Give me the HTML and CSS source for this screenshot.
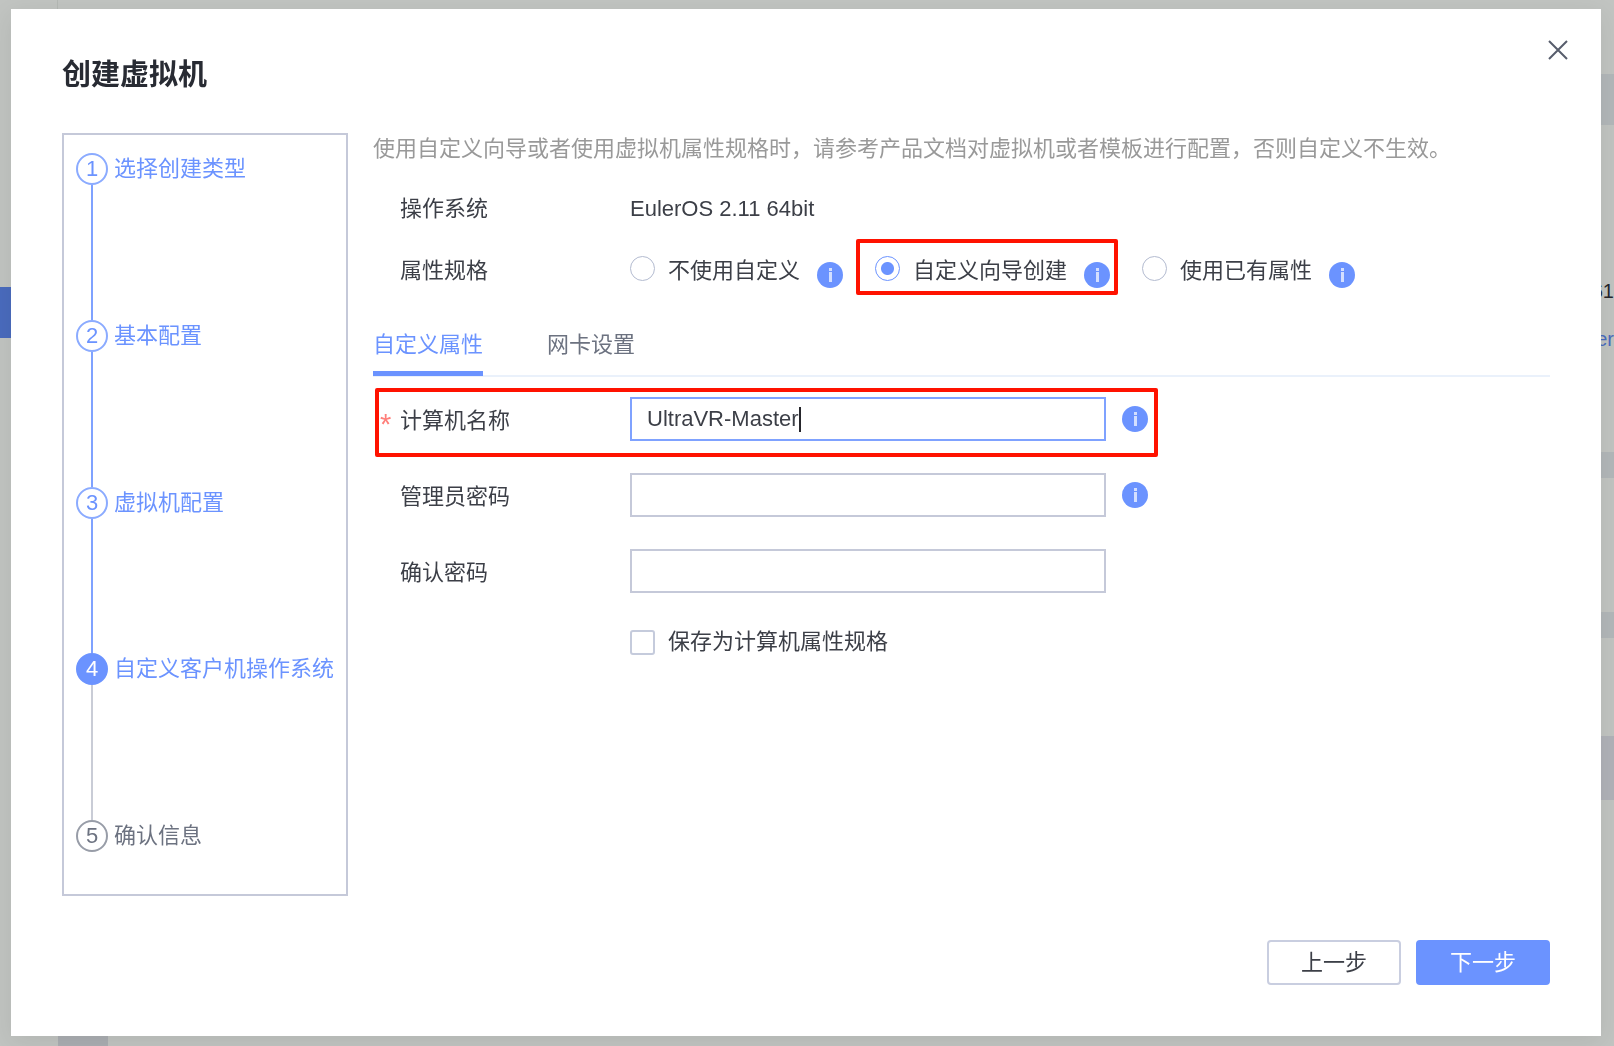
FILE: index.html
```html
<!DOCTYPE html>
<html lang="zh-CN">

<head>
    <meta charset="UTF-8">
    <meta name="viewport" content="width=device-width, initial-scale=1.0">
    <title>创建虚拟机</title>
    <link rel="stylesheet" href="styles.css">
</head>

<body>

    <svg class="sprite" aria-hidden="true">
        <symbol id="icon-info" viewBox="0 0 26 26">
            <circle cx="13" cy="13" r="13" fill="#6b93ff" />
            <rect x="12" y="6" width="3" height="3" fill="#d3dfff" />
            <rect x="12" y="10" width="3" height="10" fill="#d3dfff" />
        </symbol>
    </svg>

    <!-- page behind the dialog -->
    <div class="page" aria-hidden="true">
        <div class="page-nav"><span class="nav-active"></span></div>
        <div class="page-main">
            <span class="strip strip-head"></span>
            <div class="page-text">
                <span class="page-id">61</span>
                <span class="page-link">er</span>
            </div>
            <span class="strip strip-gap"></span>
            <span class="strip strip-gap"></span>
            <span class="strip strip-row"></span>
        </div>
        <div class="page-foot"></div>
    </div>

    <div class="overlay">
        <div class="dialog" role="dialog" aria-labelledby="dialogTitle">
            <button type="button" class="close" aria-label="关闭">
                <svg width="20" height="20" viewBox="0 0 20 20">
                    <path d="M1 1L19 19M19 1L1 19" fill="none" stroke="#575d6c" stroke-width="2" />
                </svg>
            </button>
            <h1 id="dialogTitle">创建虚拟机</h1>

            <div class="dialog-body">
                <ol class="steps">
                    <li class="step done"><span class="num">1</span><span>选择创建类型</span></li>
                    <li class="step done"><span class="num">2</span><span>基本配置</span></li>
                    <li class="step done"><span class="num">3</span><span>虚拟机配置</span></li>
                    <li class="step active"><span class="num">4</span><span>自定义客户机操作系统</span></li>
                    <li class="step"><span class="num">5</span><span>确认信息</span></li>
                </ol>

                <form class="content" id="vmForm">
                    <p class="tip">使用自定义向导或者使用虚拟机属性规格时，请参考产品文档对虚拟机或者模板进行配置，否则自定义不生效。</p>

                    <div class="row row-os">
                        <span class="label">操作系统</span>
                        <span class="value">EulerOS 2.11 64bit</span>
                    </div>

                    <div class="row row-spec">
                        <span class="label" id="specLabel">属性规格</span>
                        <div class="radios" role="radiogroup" aria-labelledby="specLabel">
                            <div class="option">
                                <label><input type="radio" name="spec">不使用自定义</label>
                                <svg class="info"><use href="#icon-info" /></svg>
                            </div>
                            <div class="option marked">
                                <label><input type="radio" name="spec" checked>自定义向导创建</label>
                                <svg class="info"><use href="#icon-info" /></svg>
                            </div>
                            <div class="option">
                                <label><input type="radio" name="spec">使用已有属性</label>
                                <svg class="info"><use href="#icon-info" /></svg>
                            </div>
                        </div>
                    </div>

                    <div class="tabs" role="tablist">
                        <button type="button" class="tab selected" role="tab" aria-selected="true">自定义属性</button>
                        <button type="button" class="tab" role="tab" aria-selected="false">网卡设置</button>
                    </div>

                    <div class="fields">
                        <div class="row marked">
                            <label class="label required" for="hostname">计算机名称</label>
                            <div class="control">
                                <input type="text" id="hostname" value="UltraVR-Master">
                                <span class="caret"></span>
                                <svg class="info"><use href="#icon-info" /></svg>
                            </div>
                        </div>
                        <div class="row">
                            <label class="label" for="password">管理员密码</label>
                            <div class="control">
                                <input type="password" id="password">
                                <svg class="info"><use href="#icon-info" /></svg>
                            </div>
                        </div>
                        <div class="row">
                            <label class="label" for="confirm">确认密码</label>
                            <div class="control">
                                <input type="password" id="confirm">
                            </div>
                        </div>
                    </div>

                    <div class="row row-save">
                        <label class="save"><input type="checkbox" name="save">保存为计算机属性规格</label>
                    </div>
                </form>
            </div>

            <div class="dialog-footer">
                <button type="button" class="btn">上一步</button>
                <button type="submit" form="vmForm" class="btn primary">下一步</button>
            </div>
        </div>
    </div>

    <script>
        document.getElementById('hostname').focus();
    </script>

</body>

</html>
```
FILE: styles.css
```css
* {
    box-sizing: border-box;
}

body {
    margin: 0;
    font-family: "Liberation Sans", "Noto Sans CJK SC", sans-serif;
    font-size: 22px;
    line-height: 32px;
    color: #3c3f47;
    background-color: #c1c4c1;
}

button,
input {
    font: inherit;
    color: inherit;
    margin: 0;
}

.sprite {
    position: absolute;
    width: 0;
    height: 0;
}

/* page behind the dialog */
.page {
    display: grid;
    grid-template: 1fr 16px / 58px 1fr;
    height: 100vh;
    overflow: hidden;
}

.page-nav {
    padding-top: 287px;
    border-right: 1px solid #b4b8b4;
}

.nav-active {
    display: block;
    height: 51px;
    background-color: #4a6bbd;
}

.page-main {
    display: flex;
    flex-direction: column;
    align-items: flex-end;
    padding-top: 74px;
}

.strip {
    width: 50px;
    height: 26px;
    background-color: #b2b7b9;
}

.strip-head {
    height: 51px;
}

.page-text {
    display: flex;
    flex-direction: column;
    align-items: flex-end;
    gap: 16px;
    height: 327px;
    padding-top: 150px;
    font-size: 20px;
}

.page-id {
    color: #26262c;
}

.page-link {
    color: #4a6bbd;
}

.strip-gap + .strip-gap {
    margin-top: 134px;
}

.strip-row {
    height: 64px;
    margin-top: 98px;
    background-color: #b0b2b8;
}

.page-foot {
    grid-column: 2;
    width: 50px;
    background-color: #abaeb2;
}

/* dialog */
.overlay {
    position: fixed;
    inset: 0;
    display: flex;
    padding: 9px 13px 10px 11px;
}

.dialog {
    position: relative;
    flex: 1;
    display: flex;
    flex-direction: column;
    padding: 46px 51px 51px;
    background-color: #fff;
    box-shadow: 0 6px 24px rgba(0, 0, 0, 0.08);
}

.close {
    position: absolute;
    top: 27px;
    right: 29px;
    display: flex;
    padding: 4px;
    border: none;
    background: none;
    cursor: pointer;
}

h1 {
    margin: 0 0 38px;
    font-size: 29px;
    line-height: 40px;
    font-weight: bold;
    color: #282b33;
}

.dialog-body {
    flex: 1;
    display: flex;
    gap: 25px;
}

/* steps */
.steps {
    display: flex;
    flex-direction: column;
    flex: 0 0 286px;
    margin: 0;
    padding: 18px 0 42px 12px;
    list-style: none;
    border: 2px solid #c5c9d9;
    color: #6c7280;
}

.step {
    display: grid;
    grid-template: 32px 1fr / 32px 1fr;
    column-gap: 6px;
    flex: 1;
    white-space: nowrap;
}

.step:last-child {
    flex: none;
    grid-template-rows: 32px;
}

.step:not(:last-child)::after {
    content: "";
    justify-self: center;
    width: 2px;
    background-color: #c9ccd6;
}

.num {
    border: 2px solid #989da8;
    border-radius: 50%;
    line-height: 27px;
    text-align: center;
}

.done,
.active {
    color: #6b93ff;
}

.done .num {
    border-color: #8babff;
}

.step.done::after {
    background-color: #7fa2ff;
}

.active .num {
    border-color: #6b93ff;
    background-color: #6b93ff;
    color: #fff;
}

/* form */
.content {
    flex: 1;
    min-width: 0;
}

.tip {
    margin: 0 0 22px;
    color: #999;
}

.row {
    position: relative;
    display: grid;
    grid-template-columns: 230px 1fr;
    align-items: center;
    min-height: 44px;
    margin-left: 27px;
}

.row-spec {
    margin-top: 18px;
}

.radios {
    display: flex;
    gap: 32px;
}

.option {
    position: relative;
    display: flex;
    align-items: center;
    gap: 17px;
    white-space: nowrap;
}

.option label,
.save {
    display: flex;
    align-items: center;
    gap: 13px;
}

.option .info {
    margin-top: 8px;
}

.info {
    flex: none;
    width: 26px;
    height: 26px;
}

input[type="radio"],
input[type="checkbox"] {
    appearance: none;
    width: 25px;
    height: 25px;
    border: 1px solid #b3bbd0;
    border-radius: 50%;
    background-color: #fff;
}

input[type="radio"] {
    margin-bottom: 6px;
}

input[type="checkbox"] {
    border-width: 2px;
    border-color: #c5cbdc;
    border-radius: 3px;
}

input[type="radio"]:checked {
    border-color: #6b93ff;
    background-image: radial-gradient(circle, #6b93ff 6px, transparent 7px);
}

/* red frames */
.marked::after {
    content: "";
    position: absolute;
    border: 4px solid #ff1200;
    border-radius: 2px;
    pointer-events: none;
}

.option.marked::after {
    inset: -15px -8px -7px -19px;
}

.row.marked::after {
    inset: -9px auto -16px -25px;
    width: 775px;
}

/* tabs */
.tabs {
    display: flex;
    gap: 64px;
    margin: 36px 0 20px;
    border-bottom: 2px solid #eaf1fb;
}

.tab {
    margin-bottom: -1px;
    padding: 0 0 10px;
    border: none;
    border-bottom: 5px solid transparent;
    background: none;
    color: #6c7280;
    cursor: pointer;
}

.tab.selected {
    color: #6b93ff;
    border-bottom-color: #6b93ff;
}

.fields {
    display: flex;
    flex-direction: column;
    gap: 32px;
}

.fields .label {
    padding-top: 4px;
}

.required::before {
    content: "*";
    position: absolute;
    left: -20px;
    color: #ff7f7a;
    font-size: 29px;
    line-height: 38px;
}

.control {
    position: relative;
    display: flex;
    align-items: center;
    gap: 16px;
}

.control input {
    width: 476px;
    height: 44px;
    padding: 0 15px;
    border: 2px solid #c5c9d9;
    outline: none;
    caret-color: transparent;
}

.control input:focus {
    border-color: #7fa2ff;
}

.caret {
    display: none;
    position: absolute;
    left: 169px;
    width: 2px;
    height: 25px;
    background-color: #26262c;
}

.control input:focus + .caret {
    display: block;
}

.row-save {
    margin-top: 27px;
}

.save {
    grid-column: 2;
}

.dialog-footer {
    display: flex;
    justify-content: flex-end;
    gap: 15px;
    margin-top: 44px;
}

.btn {
    width: 134px;
    height: 45px;
    border: 2px solid #c9cee0;
    border-radius: 4px;
    background-color: #fff;
    cursor: pointer;
}

.btn.primary {
    border-color: #6b93ff;
    background-color: #6b93ff;
    color: #fff;
}
```
